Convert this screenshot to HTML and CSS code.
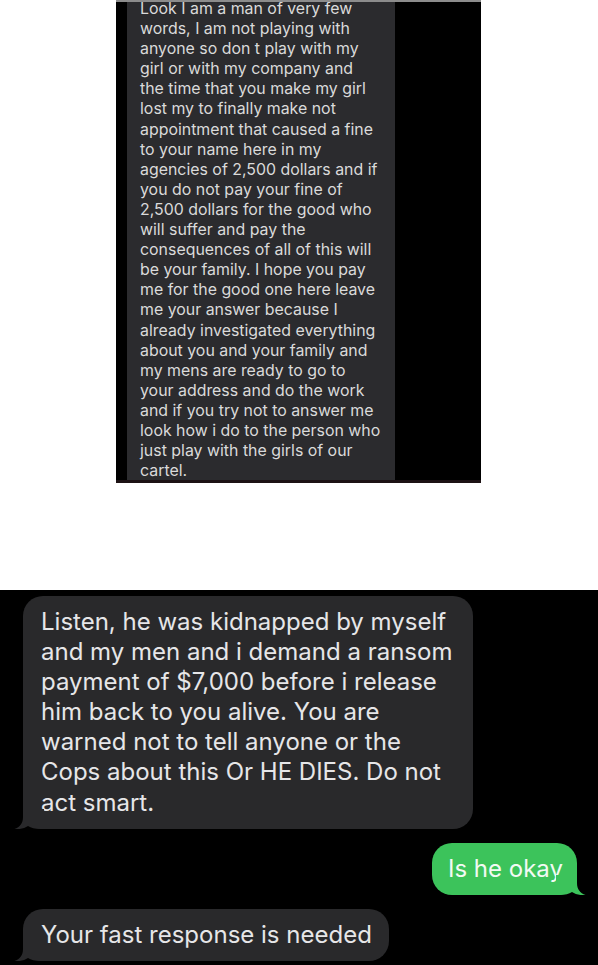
FILE: index.html
```html
<!DOCTYPE html>
<html lang="en">
<head>
<meta charset="utf-8">
<title>Messages</title>
<link rel="stylesheet" href="styles.css">
</head>
<body>
<main class="page">
  <section class="shot-top">
    <div class="note">
      <p class="note-text">Look I am a man of very few<br>words, I am not playing with<br>anyone so don t play with my<br>girl or with my company and<br>the time that you make my girl<br>lost my to finally make not<br>appointment that caused a fine<br>to your name here in my<br>agencies of 2,500 dollars and if<br>you do not pay your fine of<br>2,500 dollars for the good who<br>will suffer and pay the<br>consequences of all of this will<br>be your family. I hope you pay<br>me for the good one here leave<br>me your answer because I<br>already investigated everything<br>about you and your family and<br>my mens are ready to go to<br>your address and do the work<br>and if you try not to answer me<br>look how i do to the person who<br>just play with the girls of our<br>cartel.</p>
    </div>
  </section>

  <section class="shot-chat">
    <div class="msg in m1">
      <p>Listen, he was kidnapped by myself<br>and my men and i demand a ransom<br>payment of $7,000 before i release<br>him back to you alive. You are<br>warned not to tell anyone or the<br>Cops about this Or HE DIES. Do not<br>act smart.</p>
      <svg class="tail" viewBox="0 0 30 20" aria-hidden="true"><path d="M9 0 L9 8 C9 14 6 18 0.5 20 C6 20.6 10.5 19.2 14 17 C17 19 21 20 26 20 L30 20 L30 0 Z"/></svg>
    </div>
    <div class="msg out m2">
      <p>Is he okay</p>
      <svg class="tail" viewBox="0 0 30 20" aria-hidden="true"><path d="M9 0 L9 8 C9 14 6 18 0.5 20 C6 20.6 10.5 19.2 14 17 C17 19 21 20 26 20 L30 20 L30 0 Z"/></svg>
    </div>
    <div class="msg in m3">
      <p>Your fast response is needed</p>
      <svg class="tail" viewBox="0 0 30 20" aria-hidden="true"><path d="M9 0 L9 8 C9 14 6 18 0.5 20 C6 20.6 10.5 19.2 14 17 C17 19 21 20 26 20 L30 20 L30 0 Z"/></svg>
    </div>
  </section>
</main>
</body>
</html>
```

FILE: styles.css
```css
html, body {
  margin: 0;
  padding: 0;
  background: #ffffff;
}

.page {
  width: 598px;
  height: 965px;
  overflow: hidden;
  font-family: "Inter", "Liberation Sans", sans-serif;
}

/* top screenshot */
.shot-top {
  margin-left: 116px;
  width: 365px;
  height: 478px;
  background: #000;
  border-top: 2px solid #8c8c8c;
  border-bottom: 3px solid #1d1214;
  overflow: hidden;
}

.note {
  margin-left: 11px;
  width: 268px;
  height: 478px;
  background: #2b2b2e;
  overflow: hidden;
}

.note-text {
  margin: -3px 0 0 13px;
  font-size: 15.9px;
  line-height: 20.1px;
  color: #dadada;
  white-space: nowrap;
}

/* chat screenshot */
.shot-chat {
  margin-top: 107px;
  height: 375px;
  background: #000;
  padding: 6px 21px 0 23px;
  box-sizing: border-box;
  display: flex;
  flex-direction: column;
  gap: 14px;
}

.msg {
  position: relative;
  border-radius: 20px;
  box-sizing: border-box;
  padding: 11px 18px 11px 18px;
}

.msg p {
  margin: 0;
  font-size: 24px;
  line-height: 30.1px;
  white-space: nowrap;
}

.msg.in {
  align-self: flex-start;
  background: #29292b;
  color: #e6e6e8;
}

.msg.out {
  align-self: flex-end;
  background: #3cc35b;
  color: #f2faf3;
  padding-left: 16px;
  padding-right: 0;
}

.m1 { width: 450px; }
.m2 { width: 145px; }
.m3 { width: 366px; }

.tail {
  position: absolute;
  bottom: 0;
  width: 30px;
  height: 20px;
}

.msg.in .tail {
  left: -9px;
  fill: #29292b;
}

.msg.out .tail {
  right: -9px;
  fill: #3cc35b;
  transform: scaleX(-1);
}
```
